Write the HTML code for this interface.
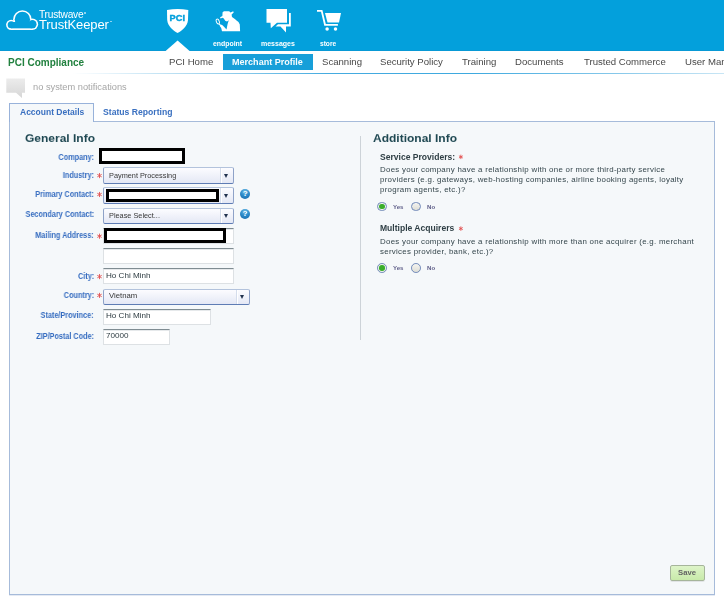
<!DOCTYPE html>
<html><head><meta charset="utf-8">
<style>
html,body{margin:0;padding:0;}
body{width:724px;height:600px;position:relative;overflow:hidden;background:#fff;font-family:"Liberation Sans",sans-serif;}
.a{position:absolute;}
.t{position:absolute;white-space:nowrap;line-height:0;will-change:transform;font-family:"Liberation Sans",sans-serif;}
.hdr{left:0;top:0;width:724px;height:51px;background:#03a0dc;}
.nav{color:#484848;font-size:9.6px;}
.lbl{color:#356cc0;font-weight:bold;font-size:8.2px;text-align:right;transform:scaleX(0.89);transform-origin:100% 0;}
.inp{position:absolute;background:#fff;border:1px solid #dde1e4;border-top-color:#7f8c92;box-shadow:inset 0 1px 0 #e6e9eb;box-sizing:border-box;}
.sel{position:absolute;box-sizing:border-box;border:1px solid #8ea2c8;border-top-color:#b3c3dc;border-bottom-color:#5e7cb4;border-radius:2px;background:linear-gradient(#fcfcff,#e4e8f5);}
.sel .dv{position:absolute;top:0;bottom:0;width:1px;background:#d5ddec;box-shadow:1px 0 0 #fff;}
.sel .ar{position:absolute;width:0;height:0;border-left:2.6px solid transparent;border-right:2.6px solid transparent;border-top:4px solid #22334f;}
.itx{color:#2c3a40;font-size:8.1px;}
.stx{color:#383838;font-size:7.33px;}
.para{color:#35464c;font-size:7.9px;letter-spacing:0.28px;}
.blk{position:absolute;box-sizing:border-box;border:3.5px solid #000;background:#fff;}
.help{position:absolute;width:10px;height:10px;border-radius:50%;background:radial-gradient(circle at 50% 25%,#6cbde8 0%,#2a88c8 50%,#1667a8 100%);}
.help span{position:absolute;left:0;top:5px;width:10px;text-align:center;color:#fff;font-weight:bold;font-size:8px;line-height:0;}
.radio{position:absolute;width:9.8px;height:9.8px;box-sizing:border-box;border-radius:50%;border:1.3px solid #7089b8;background:linear-gradient(#f4f4f0,#deded6);}
.radio.on{background:#eef3ec;}
.radio.on:after{content:"";position:absolute;left:1.1px;top:1.1px;width:5.6px;height:5.6px;border-radius:50%;background:#3aae2a;}
.rtx{color:#60608a;font-size:6.1px;font-weight:bold;}
</style></head><body>

<!-- HEADER -->
<div class="a hdr"></div>
<div class="a" style="left:0;top:50px;width:724px;height:1px;background:#0899d5;"></div>

<!-- cloud logo -->
<svg class="a" style="left:0;top:0" width="50" height="40" viewBox="0 0 50 40">
  <g fill="#fff">
    <circle cx="11.2" cy="24.8" r="5.15"/>
    <circle cx="22.4" cy="19.5" r="9.3"/>
    <circle cx="32.4" cy="24.2" r="5.75"/>
    <rect x="11.2" y="24" width="21.2" height="5.95"/>
  </g>
  <g fill="#03a0dc">
    <circle cx="11.2" cy="24.8" r="3.55"/>
    <circle cx="22.4" cy="19.5" r="7.7"/>
    <circle cx="32.4" cy="24.2" r="4.15"/>
    <rect x="11.2" y="22" width="21.2" height="6.35"/>
  </g>
</svg>
<div class="t" style="left:39.3px;top:14.6px;color:#fff;font-size:10.2px;letter-spacing:-0.25px;">Trustwave</div>
<div class="a" style="left:84.3px;top:12.4px;width:2px;height:1.4px;background:rgba(255,255,255,.55);"></div>
<div class="t" style="left:39.2px;top:25.1px;color:#fff;font-size:13px;letter-spacing:-0.12px;">TrustKeeper</div>
<div class="a" style="left:110.3px;top:21.2px;width:2.2px;height:1.3px;background:rgba(255,255,255,.55);"></div>

<!-- PCI shield -->
<svg class="a" style="left:0;top:0" width="360" height="51" viewBox="0 0 360 51">
  <path fill="#fff" d="M167,10 Q177.6,8.2 188.3,10 L188,20 C187.5,26 182.5,30.5 177.6,33 C172.7,30.5 167.7,26 167.2,20 Z"/>
  <text x="169.6" y="20.6" textLength="15.4" lengthAdjust="spacingAndGlyphs" fill="#03a0dc" font-family="Liberation Sans" font-weight="bold" font-size="8.2" stroke="#03a0dc" stroke-width="0.35">PCI</text>
  <path fill="#fff" d="M177.6,40.4 L189.6,51 L165.6,51 Z"/>
  <!-- detective -->
  <path fill="#fff" d="M222.6,12.2 L224,11.2 L229.2,11.2 L230.5,12.4 L233.2,11.3 L233.7,12.6 L231.6,14.6 L232,17 L235.2,19.2 L236.2,20.3 L238.5,22 L239.8,24.6 L240.1,31.3 L222,31.3 L221.2,28 L219.6,25.7 L220.6,24.4 L222.2,25.1 L224,26.7 L226.5,29.6 L227.6,24 L228.8,20.2 L227,21.4 L225.2,20.7 L223.8,18.6 L222.6,17.8 L220.5,18.4 L220.1,17.3 L222.4,16 L222.5,13.5 Z"/>
  <ellipse cx="217.8" cy="21.5" rx="1.45" ry="2.5" fill="none" stroke="#fff" stroke-width="0.9" transform="rotate(-22 217.8 21.5)"/>
  <path stroke="#fff" stroke-width="1.1" d="M218.9,23.8 L220.4,25.2"/>
  <!-- messages -->
  <path fill="#fff" d="M266.5,9.1 H287 V22.8 H277 L270.8,28.3 L270.5,22.8 H266.5 Z"/>
  <path fill="#fff" d="M289,13 H290.8 V26.5 H286 V32.5 L280.5,26.5 H275.5 L278,24.2 H289 Z"/>
  <!-- cart -->
  <path fill="#fff" d="M317,10.1 H322.4 L325.8,24 H337.9 V25.8 H324.3 L321,11.8 H317 Z"/>
  <path fill="#fff" d="M325,13 H341 L339,22.6 H327.5 Z"/>
  <circle cx="327.1" cy="28.9" r="1.75" fill="#fff"/>
  <circle cx="335.5" cy="28.9" r="1.75" fill="#fff"/>
</svg>
<div class="t" style="left:213px;top:43.5px;color:#fff;font-weight:bold;font-size:6.9px;">endpoint</div>
<div class="t" style="left:261px;top:43.5px;color:#fff;font-weight:bold;font-size:7.0px;">messages</div>
<div class="t" style="left:320px;top:43.5px;color:#fff;font-weight:bold;font-size:6.6px;">store</div>

<!-- NAV -->
<div class="t" style="left:8px;top:62.5px;color:#22813f;font-weight:bold;font-size:10px;">PCI Compliance</div>
<div class="a" style="left:223px;top:54px;width:90px;height:16px;background:#179fd9;"></div>
<div class="t nav" style="left:169px;top:61.7px;">PCI Home</div>
<div class="t" style="left:232px;top:61.7px;color:#fff;font-weight:bold;font-size:9.05px;-webkit-text-stroke:0;opacity:.97">Merchant Profile</div>
<div class="t nav" style="left:322px;top:61.7px;">Scanning</div>
<div class="t nav" style="left:380px;top:61.7px;">Security Policy</div>
<div class="t nav" style="left:462px;top:61.7px;">Training</div>
<div class="t nav" style="left:515px;top:61.7px;">Documents</div>
<div class="t nav" style="left:584px;top:61.7px;">Trusted Commerce</div>
<div class="t nav" style="left:685px;top:61.7px;">User Management</div>
<div class="a" style="left:0;top:73px;width:724px;height:1px;background:linear-gradient(90deg,rgba(120,190,230,0) 10%,#a6d6ef 28%,#45abe0 45%,#3ea9df 65%,#86c8ea 85%,#c9e6f5 100%);"></div>

<!-- notification -->
<svg class="a" style="left:0;top:70px" width="40" height="35" viewBox="0 70 40 35">
  <defs><linearGradient id="bg1" x1="0" y1="0" x2="0" y2="1"><stop offset="0" stop-color="#ececec"/><stop offset="1" stop-color="#d6d6d6"/></linearGradient></defs>
  <path fill="url(#bg1)" d="M6.3,78.6 H25 V92.8 H22 V98 L16,92.8 H6.3 Z"/>
</svg>
<div class="t" style="left:33px;top:87.2px;color:#a6a6a6;font-size:9.27px;">no system notifications</div>

<!-- TABS + PANEL -->
<div class="a" style="left:9px;top:121px;width:704px;height:472px;background:#f5f8fa;border:1px solid #a6bbda;box-shadow:0 1px 0 rgba(180,196,222,.35);"></div>
<div class="a" style="left:9px;top:103px;width:83px;height:18px;background:#f5f8fa;border:1px solid #98b2da;border-bottom:none;"></div>
<div class="t" style="left:19.5px;top:111.8px;color:#3a70c0;font-weight:bold;font-size:8.5px;">Account Details</div>
<div class="t" style="left:103px;top:111.9px;color:#3a70c0;font-weight:bold;font-size:8.64px;">Status Reporting</div>

<!-- LEFT: General Info -->
<div class="t" style="left:24.5px;top:137.5px;color:#1f4852;font-weight:bold;font-size:12px;transform:scaleY(0.87);transform-origin:0 4.16px;">General Info</div>

<div class="t lbl" style="right:630px;top:158.1px;">Company:</div>
<div class="t lbl" style="right:630px;top:176.1px;">Industry:</div>
<div class="t lbl" style="right:630px;top:194.8px;">Primary Contact:</div>
<div class="t lbl" style="right:630px;top:214.8px;">Secondary Contact:</div>
<div class="t lbl" style="right:630px;top:236.4px;">Mailing Address:</div>
<div class="t lbl" style="right:630px;top:276.8px;">City:</div>
<div class="t lbl" style="right:630px;top:295.6px;">Country:</div>
<div class="t lbl" style="right:630px;top:315.8px;">State/Province:</div>
<div class="t lbl" style="right:630px;top:337.1px;">ZIP/Postal Code:</div>


<!-- company (black redaction) -->
<div class="blk" style="left:99px;top:148px;width:86px;height:16px;"></div>

<!-- industry select -->
<div class="sel" style="left:103px;top:167px;width:131px;height:17px;">
  <div class="dv" style="left:115.5px;"></div>
  <div class="ar" style="left:120px;top:5.6px;"></div>
</div>
<div class="t stx" style="left:109px;top:175.5px;">Payment Processing</div>

<!-- primary contact select -->
<div class="sel" style="left:103px;top:187px;width:131px;height:17px;">
  <div class="dv" style="left:115.5px;"></div>
  <div class="ar" style="left:120px;top:5.6px;"></div>
</div>
<div class="blk" style="left:105.9px;top:188.6px;width:112.7px;height:13.6px;border-width:3.6px 3.4px 3.2px 3.9px;"></div>
<div class="help" style="left:240.2px;top:189px;"><span>?</span></div>

<!-- secondary select -->
<div class="sel" style="left:103px;top:207.5px;width:131px;height:16.5px;">
  <div class="dv" style="left:115.5px;"></div>
  <div class="ar" style="left:120px;top:5.6px;"></div>
</div>
<div class="t stx" style="left:109px;top:216px;">Please Select...</div>
<div class="help" style="left:240.2px;top:209px;"><span>?</span></div>

<!-- mailing address -->
<div class="inp" style="left:103px;top:228px;width:131px;height:16px;"></div>
<div class="blk" style="left:104px;top:228px;width:122px;height:15px;"></div>
<div class="inp" style="left:103px;top:248px;width:131px;height:16px;"></div>

<!-- city -->
<div class="inp" style="left:103px;top:268px;width:131px;height:16px;"></div>
<div class="t itx" style="left:106px;top:276px;">Ho Chi Minh</div>

<!-- country -->
<div class="sel" style="left:103px;top:288.5px;width:147px;height:16px;">
  <div class="dv" style="left:131.7px;"></div>
  <div class="ar" style="left:136px;top:5.3px;"></div>
</div>
<div class="t stx" style="left:108.5px;top:296.4px;font-size:7.73px;">Vietnam</div>

<!-- state -->
<div class="inp" style="left:103px;top:308.5px;width:108px;height:16px;"></div>
<div class="t itx" style="left:106px;top:316px;">Ho Chi Minh</div>

<!-- zip -->
<div class="inp" style="left:103px;top:328.5px;width:67px;height:16px;"></div>
<div class="t itx" style="left:106px;top:336.3px;">70000</div>

<!-- divider -->
<div class="a" style="left:360px;top:136px;width:1px;height:204px;background:#cdd3d8;"></div>

<!-- RIGHT: Additional Info -->
<div class="t" style="left:372.8px;top:137.6px;color:#1f4852;font-weight:bold;font-size:12px;transform:scaleY(0.87);transform-origin:0 4.16px;">Additional Info</div>
<div class="t" style="left:379.5px;top:156.7px;color:#2f3f45;font-weight:bold;font-size:8.55px;">Service Providers:</div>
<div class="t para" style="left:379.5px;top:170.4px;">Does your company have a relationship with one or more third-party service</div>
<div class="t para" style="left:379.5px;top:180.0px;">providers (e.g. gateways, web-hosting companies, airline booking agents, loyalty</div>
<div class="t para" style="left:379.5px;top:189.7px;">program agents, etc.)?</div>
<div class="radio on" style="left:377px;top:201.6px;"></div>
<div class="t rtx" style="left:393px;top:207px;">Yes</div>
<div class="radio" style="left:411px;top:201.6px;"></div>
<div class="t rtx" style="left:426.5px;top:207px;">No</div>

<div class="t" style="left:379.5px;top:228.4px;color:#2f3f45;font-weight:bold;font-size:8.55px;">Multiple Acquirers</div>
<div class="t para" style="left:379.5px;top:241.7px;">Does your company have a relationship with more than one acquirer (e.g. merchant</div>
<div class="t para" style="left:379.5px;top:251.7px;">services provider, bank, etc.)?</div>
<div class="radio on" style="left:377px;top:263px;"></div>
<div class="t rtx" style="left:393px;top:268.4px;">Yes</div>
<div class="radio" style="left:411px;top:263px;"></div>
<div class="t rtx" style="left:426.5px;top:268.4px;">No</div>

<svg class="a" style="left:0;top:0" width="724" height="600" viewBox="0 0 724 600"><path d="M99.50,173.05V178.15M97.29,174.32L101.71,176.88M97.29,176.88L101.71,174.32M99.50,191.95V197.05M97.29,193.22L101.71,195.78M97.29,195.78L101.71,193.22M99.50,233.65V238.75M97.29,234.92L101.71,237.47M97.29,237.47L101.71,234.92M99.50,274.05V279.15M97.29,275.33L101.71,277.88M97.29,277.88L101.71,275.33M99.50,292.85V297.95M97.29,294.12L101.71,296.67M97.29,296.67L101.71,294.12M460.85,154.70V159.10M458.94,155.80L462.76,158.00M458.94,158.00L462.76,155.80M460.85,226.40V230.80M458.94,227.50L462.76,229.70M458.94,229.70L462.76,227.50" stroke="#e25050" stroke-width="0.9" fill="none"/></svg>
<!-- save -->
<div class="a" style="left:669.5px;top:565px;width:35px;height:16px;box-sizing:border-box;border:1px solid #a6b59b;border-radius:2px;background:linear-gradient(#ddf4c8,#c8eaaa);box-shadow:0 1px 0 rgba(0,0,0,0.08);"></div>
<div class="t" style="left:678px;top:573px;color:#626262;font-weight:bold;font-size:7.7px;">Save</div>

</body></html>
